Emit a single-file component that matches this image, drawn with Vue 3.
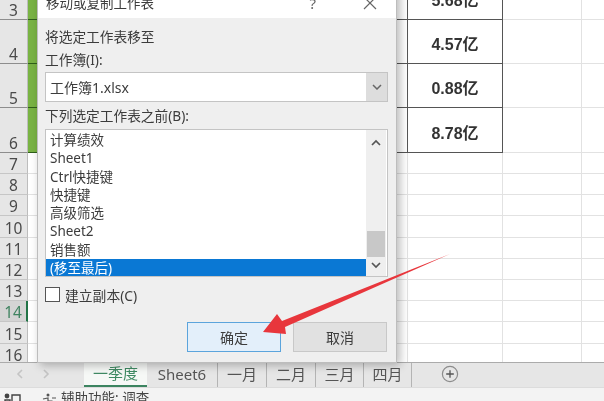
<script setup>
const rows = [
  { n: 3, h: 44, value: '5.68亿', boxed: true },
  { n: 4, h: 44, value: '4.57亿', boxed: true },
  { n: 5, h: 44, value: '0.88亿', boxed: true },
  { n: 6, h: 45, value: '8.78亿', boxed: true },
  { n: 7, h: 21 },
  { n: 8, h: 21 },
  { n: 9, h: 21 },
  { n: 10, h: 22 },
  { n: 11, h: 21 },
  { n: 12, h: 21 },
  { n: 13, h: 21 },
  { n: 14, h: 21, active: true },
  { n: 15, h: 22 },
  { n: 16, h: 21 }
]
const sheets = ['计算绩效', 'Sheet1', 'Ctrl快捷键', '快捷键', '高级筛选', 'Sheet2', '销售额']
const tabs = ['一季度', 'Sheet6', '一月', '二月', '三月', '四月']
</script>

<template>
  <div class="screen">
    <div class="sheet">
      <div class="rows">
        <div
          v-for="row in rows"
          :key="row.n"
          class="row"
          :class="{ boxed: row.boxed }"
          :style="{ height: row.h + 'px' }"
        >
          <div class="head" :class="{ active: row.active }">{{ row.n }}</div>
          <div class="cell col-a"></div>
          <div class="cell col-b"></div>
          <div class="cell col-c">{{ row.value }}</div>
          <div class="cell col-d"></div>
          <div class="cell col-e"></div>
        </div>
      </div>
    </div>

    <div class="tabbar">
      <div class="nav">
        <svg width="84" height="24" viewBox="0 0 84 24">
          <path d="M22 7l-4 4 4 4M44 7l4 4-4 4" fill="none" stroke="#c4c4c4" stroke-width="1.6" />
        </svg>
      </div>
      <div class="tabs">
        <div v-for="(tab, i) in tabs" :key="tab" class="tab" :class="{ current: i === 0 }">{{ tab }}</div>
      </div>
      <svg class="plus" width="18" height="18" viewBox="0 0 18 18">
        <circle cx="9" cy="9" r="7.6" fill="none" stroke="#8c8c8c" stroke-width="1.2" />
        <path d="M9 5.2v7.6M5.2 9h7.6" stroke="#555" stroke-width="1.3" />
      </svg>
    </div>

    <div class="status">
      <svg class="status-icon" width="17" height="13" viewBox="0 0 17 13">
        <circle cx="3" cy="4" r="2.4" fill="#444" />
        <path d="M1 8h5v5H1zM8 3h8v10H8z" fill="none" stroke="#444" stroke-width="1.4" />
      </svg>
      <svg class="access-icon" width="15" height="13" viewBox="0 0 15 13">
        <circle cx="6" cy="2" r="1.5" fill="#555" />
        <path d="M1 6l5-1v8M6 8h4l2 4M10 5h4" fill="none" stroke="#555" stroke-width="1.2" />
      </svg>
      <span>辅助功能: 调查</span>
    </div>

    <section class="dialog">
      <header class="title">
        <span class="title-text">移动或复制工作表</span>
        <span class="help">?</span>
        <svg class="close" width="14" height="14" viewBox="0 0 14 14">
          <path d="M1 1l12 12M13 1L1 13" stroke="#666" stroke-width="1.2" />
        </svg>
      </header>
      <div class="body">
        <div class="label first">将选定工作表移至</div>
        <div class="label">工作簿(I):</div>
        <div class="select">
          <span class="select-value">工作簿1.xlsx</span>
          <span class="select-btn">
            <svg width="10" height="6" viewBox="0 0 10 6"><path d="M1 1l4 4 4-4" fill="none" stroke="#666" stroke-width="1.5" /></svg>
          </span>
        </div>
        <div class="label">下列选定工作表之前(B):</div>
        <div class="listbox">
          <ul class="items">
            <li v-for="s in sheets" :key="s">{{ s }}</li>
            <li class="selected">(移至最后)</li>
          </ul>
          <div class="scrollbar">
            <svg width="10" height="7" viewBox="0 0 10 7"><path d="M1 6l4-4 4 4" fill="none" stroke="#555" stroke-width="1.7" /></svg>
            <div class="thumb"></div>
            <svg width="10" height="7" viewBox="0 0 10 7"><path d="M1 1l4 4 4-4" fill="none" stroke="#555" stroke-width="1.7" /></svg>
          </div>
        </div>
        <label class="copy"><span class="box"></span><span class="copy-text">建立副本(C)</span></label>
        <div class="actions">
          <button class="btn primary">确定</button>
          <button class="btn">取消</button>
        </div>
      </div>
    </section>

    <svg class="arrow" width="604" height="401" viewBox="0 0 604 401">
      <polygon points="450,254 282,321 277,314 263,332 286,334 285,327" fill="#e8363c" />
    </svg>
  </div>
</template>

<style scoped>
.screen {
  position: relative;
  width: 604px;
  height: 401px;
  overflow: hidden;
  display: flex;
  flex-direction: column;
  background: #fff;
  color: #3c3c3c;
  font-family: "Noto Sans", "Noto Sans CJK SC", sans-serif;
  filter: blur(0.45px);
}
.sheet {
  height: 362px;
  overflow: hidden;
  flex: none;
}
.rows {
  margin-top: -24px;
}
.row {
  display: flex;
  box-sizing: border-box;
}
.head {
  width: 28px;
  flex: none;
  box-sizing: border-box;
  background: #e6e6e6;
  border-bottom: 1px solid #c6c6c6;
  border-right: 1px solid #bdbdbd;
  display: flex;
  align-items: flex-end;
  justify-content: center;
  font-size: 15.5px;
  line-height: 17px;
  color: #4a4a4a;
}
.head.active {
  background: #d4d4d4;
  color: #3f8360;
  border-right: 2px solid #217346;
}
.cell {
  box-sizing: border-box;
  border-bottom: 1px solid #e2e2e2;
  border-right: 1px solid #e2e2e2;
}
.col-a { width: 10px; }
.col-b { width: 370px; }
.col-c {
  width: 95px;
  display: flex;
  align-items: center;
  justify-content: center;
  padding-top: 3px;
  font-family: "Liberation Sans", "Noto Sans CJK SC", sans-serif;
  font-size: 16px;
  font-weight: 700;
  color: #333;
}
.col-d { width: 79px; }
.col-e { width: 22px; border-right: none; }
.boxed .head { border-bottom-color: #8d8d8d; }
.boxed .col-a {
  background: #79b344;
  border-right: none;
  border-bottom-color: #2f5f1a;
}
.boxed .col-b {
  border-bottom-color: #555;
  border-right-color: #555;
}
.boxed .col-c {
  border-bottom-color: #555;
  border-right-color: #555;
}

.tabbar {
  height: 26px;
  flex: none;
  box-sizing: border-box;
  display: flex;
  background: #e6e6e6;
  border-top: 1px solid #ababab;
  border-bottom: 1px solid #dcdcdc;
}
.nav { width: 84px; flex: none; }
.tabs {
  display: grid;
  grid-template-columns: 63px 71px 49px 49px 48px 48px;
  height: 22px;
}
.tab {
  display: flex;
  align-items: center;
  justify-content: center;
  box-sizing: border-box;
  font-size: 15px;
  line-height: 20px;
  padding-bottom: 2px;
  color: #555;
  border-right: 1px solid #b4b4b4;
}
.tab.current {
  background: #f6f8f6;
  color: #3f8a63;
  border-right: none;
  border-bottom: 2px solid #3c8460;
}
.plus {
  margin: 2px 0 0 29px;
  flex: none;
}
.status {
  flex: 1;
  display: flex;
  align-items: flex-start;
  background: #f3f3f3;
  font-size: 13.5px;
  line-height: 17px;
  color: #444;
  padding-top: 2px;
}
.status-icon { margin: 2px 0 0 4px; flex: none; }
.access-icon { margin: 3px 4px 0 21px; flex: none; }

.dialog {
  position: absolute;
  left: 37px;
  top: -14px;
  width: 360px;
  height: 377px;
  box-sizing: border-box;
  border: 1px solid #bdbdbd;
  background: #efefef;
  box-shadow: 3px 2px 9px rgba(0, 0, 0, 0.28);
  display: flex;
  flex-direction: column;
}
.title {
  height: 31px;
  flex: none;
  background: #fff;
  display: flex;
  align-items: center;
  padding-left: 8px;
  font-size: 13.5px;
  line-height: 18px;
}
.title-text { flex: 1; }
.help {
  font-size: 15px;
  color: #666;
  margin-right: 47px;
}
.close { margin-right: 19px; }
.body {
  padding: 9px 8px 10px 7px;
  flex: 1;
  display: flex;
  flex-direction: column;
}
.label {
  height: 20px;
  line-height: 20px;
  font-size: 13.7px;
  margin-top: 3px;
  white-space: nowrap;
}
.label.first { margin-top: 0; }
.select {
  margin-top: 2px;
  height: 30px;
  width: 343px;
  box-sizing: border-box;
  display: flex;
  border: 1px solid #c4c4c4;
  background: #fff;
}
.select-value {
  flex: 1;
  padding-left: 4px;
  line-height: 29px;
  font-size: 14px;
}
.select-btn {
  width: 21px;
  display: flex;
  align-items: center;
  justify-content: center;
  background: #dddddd;
}
.select + .label { margin-top: 4px; }
.listbox {
  margin-top: 3px;
  width: 343px;
  height: 148px;
  box-sizing: border-box;
  display: flex;
  border: 1px solid #c4c4c4;
  background: #fff;
  overflow: hidden;
}
.items {
  list-style: none;
  margin: 0;
  padding: 1px 0 0;
  flex: 1;
  font-size: 13.5px;
}
.items li {
  height: 18.3px;
  line-height: 18.3px;
  padding-left: 4px;
  white-space: nowrap;
}
.items li.selected {
  background: #0a78d4;
  color: #fff;
}
.scrollbar {
  width: 20px;
  margin-right: 1px;
  flex: none;
  background: #efefef;
  display: flex;
  flex-direction: column;
  align-items: center;
  padding-top: 9px;
  box-sizing: border-box;
}
.thumb {
  width: 18px;
  height: 26px;
  margin-top: auto;
  margin-bottom: 5px;
  background: #c8c8c8;
}
.scrollbar svg:last-child { margin-bottom: 7px; }
.copy {
  display: flex;
  align-items: center;
  margin-top: 10px;
  height: 15px;
  font-size: 13.8px;
  line-height: 15px;
}
.copy-text { padding-top: 1px; }
.box {
  width: 15px;
  height: 15px;
  box-sizing: border-box;
  border: 1px solid #555;
  background: #fff;
  margin-right: 5px;
}
.actions {
  margin-top: 20px;
  display: flex;
  justify-content: flex-end;
  gap: 12px;
  padding-right: 1px;
}
.btn {
  width: 94px;
  height: 30px;
  padding: 0 0 1px;
  box-sizing: border-box;
  border: 1px solid #c8c8c8;
  background: #e1e1e1;
  color: #3c3c3c;
  font: inherit;
  font-size: 14px;
}
.btn.primary {
  background: #e3effa;
  border-color: #5ba4dc;
}
.arrow {
  position: absolute;
  left: 0;
  top: 0;
  pointer-events: none;
}
</style>
